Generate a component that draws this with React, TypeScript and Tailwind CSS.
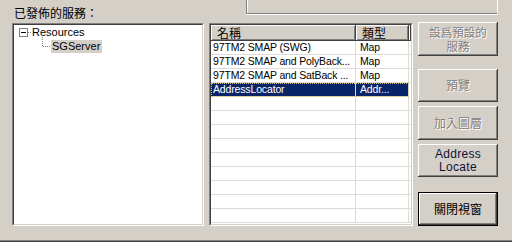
const rows = [
  { name: '97TM2 SMAP (SWG)', type: 'Map' },
  { name: '97TM2 SMAP and PolyBack...', type: 'Map' },
  { name: '97TM2 SMAP and SatBack ...', type: 'Map' },
  { name: 'AddressLocator', type: 'Addr...', selected: true },
];

const emptyRows = Array.from({ length: 9 }, (_, i) => i);

const raised =
  'shadow-[inset_-1px_-1px_#404040,inset_1px_1px_#ffffff,inset_-2px_-2px_#808080,inset_2px_2px_#d4d0c8]';

function Sunken({ className, children }: { className?: string; children?: React.ReactNode }) {
  return (
    <div className={`border border-t-[#808080] border-l-[#808080] border-b-white border-r-white ${className ?? ''}`}>
      <div className="h-full border border-t-[#404040] border-l-[#404040] border-b-[#d4d0c8] border-r-[#d4d0c8] bg-white overflow-hidden">
        {children}
      </div>
    </div>
  );
}

function Button({
  label,
  disabled,
  isDefault,
  className,
}: {
  label: React.ReactNode;
  disabled?: boolean;
  isDefault?: boolean;
  className?: string;
}) {
  return (
    <div className={`h-[34px] ${isDefault ? 'border border-black' : ''} ${className ?? ''}`}>
      <div
        className={`h-full flex flex-col items-center justify-center text-center bg-[#d4d0c8] ${raised} ${
          disabled ? 'text-[#808080] [text-shadow:1px_1px_0_#ffffff]' : 'text-black'
        }`}
      >
        {label}
      </div>
    </div>
  );
}

const cjk = "font-['Noto_Sans_CJK_TC',sans-serif]";

export default function App() {
  return (
    <div className="w-[512px] h-[242px] bg-[#d4d0c8] flex flex-col overflow-hidden text-black font-['Liberation_Sans','Noto_Sans_CJK_TC',sans-serif]">
      {/* Title + frame above */}
      <div className="flex items-start h-[23px]">
        <div className={`pl-[14px] pt-[6px] text-[12px] leading-[14px] ${cjk}`}>已發佈的服務：</div>
        <div className="ml-auto mr-[14px] w-[252px] h-[14px] border-l border-b border-r border-l-[#808080] border-b-[#808080] border-r-white shadow-[inset_1px_0_#ffffff,0_1px_#ffffff]" />
      </div>

      {/* Main */}
      <div className="flex h-[203px] pl-[12px]">
        {/* Tree */}
        <Sunken className="w-[192px] h-full">
          <div className="text-[11px] leading-[14px]">
            <div className="flex items-center h-[14px] pl-[5px]">
              <svg width="9" height="9" viewBox="0 0 9 9" className="shrink-0">
                <rect x="0.5" y="0.5" width="8" height="8" fill="#fff" stroke="#808080" />
                <line x1="2" y1="4.5" x2="7" y2="4.5" stroke="#000" />
              </svg>
              <svg width="4" height="9" viewBox="0 0 4 9" className="shrink-0">
                <rect x="0" y="4" width="1" height="1" fill="#808080" />
                <rect x="2" y="4" width="1" height="1" fill="#808080" />
              </svg>
              <span>Resources</span>
            </div>
            <div className="flex items-center h-[14px] pl-[28px]">
              <svg width="9" height="14" viewBox="0 0 9 14" overflow="visible" className="shrink-0">
                <line x1="0.5" y1="-2" x2="0.5" y2="7" stroke="#808080" strokeDasharray="1 1" />
                <line x1="1" y1="7.5" x2="9" y2="7.5" stroke="#808080" strokeDasharray="1 1" />
              </svg>
              <span className="h-[13px] leading-[13px] pl-[1px] pr-[2px] bg-[#d4d0c8]">SGServer</span>
            </div>
          </div>
        </Sunken>

        {/* List */}
        <Sunken className="w-[204px] h-full ml-[5px]">
          <div className={`flex h-[16px] text-[12px] leading-[16px] ${cjk}`}>
            <div className={`w-[145px] pl-[6px] bg-[#d4d0c8] ${raised}`}>名稱</div>
            <div className={`w-[53px] pl-[6px] bg-[#d4d0c8] ${raised}`}>類型</div>
            <div className={`flex-1 bg-[#d4d0c8] ${raised}`} />
          </div>
          <div className="text-[10.5px] leading-[13px] tracking-[-0.15px]">
            {rows.map((r) => (
              <div
                key={r.name}
                className={`flex h-[14px] border-b border-[#dedbd6] ${
                  r.selected
                    ? 'bg-[#0a246a] text-white outline-1 outline-dotted outline-[#c8c090] -outline-offset-1 w-[198px]'
                    : ''
                }`}
              >
                <div className="w-[145px] pl-[2px] whitespace-nowrap overflow-hidden border-r border-[#dedbd6]">
                  {r.name}
                </div>
                <div className="w-[53px] pl-[4px] whitespace-nowrap overflow-hidden border-r border-[#dedbd6]">
                  {r.type}
                </div>
                {!r.selected && <div className="flex-1" />}
              </div>
            ))}
            {emptyRows.map((i) => (
              <div key={i} className="flex h-[14px] border-b border-[#dedbd6]">
                <div className="w-[145px] border-r border-[#dedbd6]" />
                <div className="w-[53px] border-r border-[#dedbd6]" />
              </div>
            ))}
          </div>
        </Sunken>

        {/* Buttons */}
        <div className="w-[80px] ml-[5px] -mt-[1px] flex flex-col text-[12px]">
          <Button
            disabled
            label={
              <>
                <div className={`h-[14px] leading-[14px] text-[11.5px] ${cjk}`}>設爲預設的</div>
                <div className={`h-[14px] leading-[14px] text-[11.5px] ${cjk}`}>服務</div>
              </>
            }
          />
          <Button disabled className="mt-[13px]" label={<span className={cjk}>預覽</span>} />
          <Button disabled className="mt-[4px]" label={<span className={cjk}>加入圖層</span>} />
          <Button
            className="mt-[4px]"
            label={
              <>
                <div className="h-[13px] leading-[13px] tracking-[0.3px] text-[#10103a]">Address</div>
                <div className="h-[13px] leading-[13px] tracking-[0.3px] text-[#10103a]">Locate</div>
              </>
            }
          />
          <Button isDefault className="mt-[15px]" label={<span className={cjk}>關閉視窗</span>} />
        </div>
      </div>

      <div className="flex-1" />
      <div className="h-[2px] border-t border-[#808080] bg-[#404040]" />
    </div>
  );
}
